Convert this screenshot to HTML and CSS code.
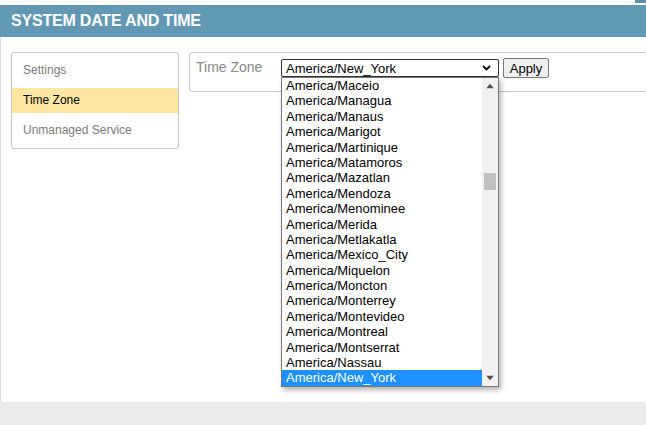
FILE: index.html
```html
<!DOCTYPE html>
<html>
<head>
<meta charset="utf-8">
<link rel="stylesheet" href="styles.css">
</head>
<body>
<div class="topstrip"><span class="corner"></span></div>
<div class="header">SYSTEM DATE AND TIME</div>
<div class="main">
  <div class="content">
    <ul class="nav">
      <li class="nav-item">Settings</li>
      <li class="nav-item active">Time Zone</li>
      <li class="nav-item">Unmanaged Service</li>
    </ul>
    <div class="panel">
      <div class="row">
        <span class="label">Time Zone</span>
        <div class="select-wrap">
          <div class="select">
            <span>America/New_York</span>
            <svg class="chev" width="9" height="6" viewBox="0 0 9 6"><path d="M1 1 L4.5 4.5 L8 1" fill="none" stroke="#000" stroke-width="1.8"/></svg>
          </div>
          <div class="dropdown">
            <ul class="options">
              <li>America/Maceio</li>
              <li>America/Managua</li>
              <li>America/Manaus</li>
              <li>America/Marigot</li>
              <li>America/Martinique</li>
              <li>America/Matamoros</li>
              <li>America/Mazatlan</li>
              <li>America/Mendoza</li>
              <li>America/Menominee</li>
              <li>America/Merida</li>
              <li>America/Metlakatla</li>
              <li>America/Mexico_City</li>
              <li>America/Miquelon</li>
              <li>America/Moncton</li>
              <li>America/Monterrey</li>
              <li>America/Montevideo</li>
              <li>America/Montreal</li>
              <li>America/Montserrat</li>
              <li>America/Nassau</li>
              <li class="sel">America/New_York</li>
            </ul>
            <div class="scrollbar">
              <svg class="arrow" width="15" height="15" viewBox="0 0 15 15"><path d="M4 9.5 L7.5 5.5 L11 9.5 Z" fill="#505050"/></svg>
              <div class="track"><div class="thumb"></div></div>
              <svg class="arrow" width="15" height="15" viewBox="0 0 15 15"><path d="M4 5.5 L7.5 9.5 L11 5.5 Z" fill="#505050"/></svg>
            </div>
          </div>
        </div>
        <button class="btn">Apply</button>
      </div>
    </div>
  </div>
</div>
</body>
</html>
```
FILE: styles.css
```css
html, body {
  margin: 0;
  padding: 0;
}
body {
  background: #ebebeb;
  font-family: "Liberation Sans", Arial, sans-serif;
  width: 646px;
  height: 425px;
  overflow: hidden;
}
.topstrip {
  height: 5px;
  background: #fff;
  display: flex;
  justify-content: flex-end;
}
.corner {
  width: 11px;
  height: 3px;
  background: #5f8ea6;
}
.header {
  height: 32px;
  line-height: 32px;
  background: #6199b5;
  color: #fff;
  font-weight: bold;
  font-size: 16px;
  padding-left: 11px;
  letter-spacing: -0.2px;
}
.main {
  background: #fff;
  border-left: 1px solid #dcdcdc;
  height: 365px;
  box-sizing: border-box;
  overflow: hidden;
}
.content {
  display: flex;
  align-items: flex-start;
  gap: 10px;
  padding: 15px 0 0 10px;
}
.nav {
  list-style: none;
  margin: 0;
  padding: 5px 0;
  width: 166px;
  border: 1px solid #c4c4c4;
  border-radius: 3px;
  display: flex;
  flex-direction: column;
  gap: 5px;
  flex-shrink: 0;
}
.nav-item {
  height: 25px;
  line-height: 25px;
  padding-left: 11px;
  font-size: 12px;
  color: #7a7a7a;
}
.nav-item.active {
  background: #fde6a1;
  color: #000;
}
.panel {
  flex: 0 0 auto;
  width: 480px;
  height: 33px;
  border: 1px solid #c8c8c8;
  border-radius: 3px;
  padding: 5px 0 0 6px;
  box-sizing: content-box;
}
.row {
  display: flex;
  align-items: center;
  height: 20px;
}
.label {
  width: 85px;
  font-size: 14px;
  color: #888;
  margin-top: -2px;
}
.select-wrap {
  position: relative;
  width: 218px;
  height: 18px;
}
.select {
  box-sizing: border-box;
  width: 218px;
  height: 18px;
  border: 1px solid #333;
  border-radius: 2px;
  display: flex;
  align-items: center;
  justify-content: space-between;
  padding: 0 7px 0 4px;
  font-size: 13px;
  color: #000;
}
.chev {
  display: block;
}
.btn {
  margin-left: 4px;
  width: 46px;
  height: 20px;
  padding: 0;
  font-family: "Liberation Sans", Arial, sans-serif;
  font-size: 13px;
  color: #000;
  background: #efefef;
  border: 1px solid #767676;
  border-radius: 2px;
}
.dropdown {
  position: absolute;
  top: 18px;
  left: 0;
  width: 218px;
  height: 310px;
  box-sizing: border-box;
  border: 1px solid #767676;
  background: #fff;
  box-shadow: 2px 3px 5px rgba(0, 0, 0, 0.3);
  display: flex;
  z-index: 5;
}
.options {
  list-style: none;
  margin: 0;
  padding: 0;
  flex: 1;
}
.options li {
  height: 15.4px;
  line-height: 15.4px;
  font-size: 13px;
  color: #000;
  padding-left: 4px;
  white-space: nowrap;
}
.options li.sel {
  background: #1e90ff;
  color: #fff;
}
.scrollbar {
  width: 16px;
  background: #f1f1f1;
  display: flex;
  flex-direction: column;
  align-items: center;
}
.arrow {
  display: block;
  width: 16px;
  height: 16px;
  flex-shrink: 0;
}
.track {
  flex: 1;
  width: 16px;
  display: flex;
  justify-content: center;
  padding-top: 79px;
  box-sizing: border-box;
}
.thumb {
  width: 12px;
  height: 17px;
  background: #c1c1c1;
}
```
